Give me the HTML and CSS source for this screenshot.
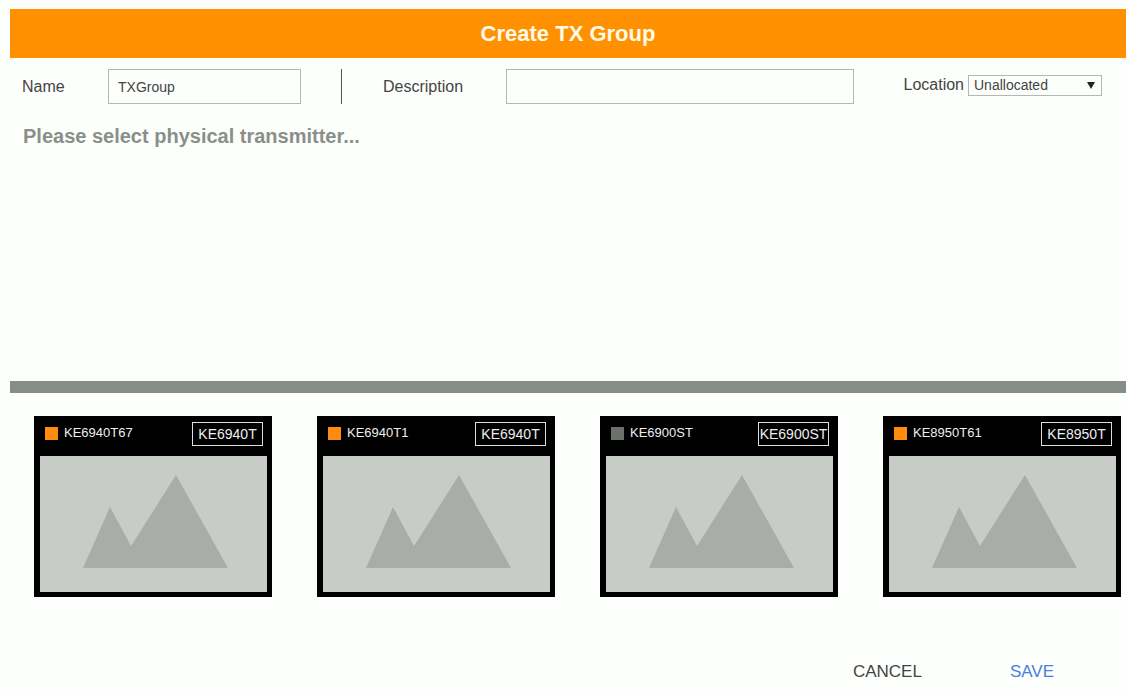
FILE: index.html
```
<!DOCTYPE html>
<html lang="en">
  <head>
    <meta charset="utf-8">
    <title>Create TX Group</title>
    <link rel="stylesheet" href="styles.css">
  </head>
  <body>
    <form class="group_form">
      <h1 class="title">Create TX Group</h1>
      <div class="fields">
        <label class="name_label" for="name">Name</label>
        <input type="text" class="text_box name_box" id="name" value="TXGroup">
        <span class="divider"></span>
        <label class="desc_label" for="desc">Description</label>
        <input type="text" class="text_box desc_box" id="desc">
        <div class="location">
          <label for="location">Location</label>
          <span class="select_wrap">
            <select id="location">
              <option>Unallocated</option>
            </select>
            <svg class="arrow" viewBox="0 0 8 7"><path d="M0 0h8L4 7z"/></svg>
          </span>
        </div>
      </div>
      <div class="selected">
        <h2>Please select physical transmitter...</h2>
      </div>
      <div class="cards">
        <div class="card">
          <div class="card_head">
            <span class="status on"></span>
            <span class="card_name">KE6940T67</span>
            <span class="model">KE6940T</span>
          </div>
          <svg class="preview" viewBox="0 0 227 136"><path d="M43 112L70 51L91 90L136 19L188 112z"/></svg>
        </div>
        <div class="card">
          <div class="card_head">
            <span class="status on"></span>
            <span class="card_name">KE6940T1</span>
            <span class="model">KE6940T</span>
          </div>
          <svg class="preview" viewBox="0 0 227 136"><path d="M43 112L70 51L91 90L136 19L188 112z"/></svg>
        </div>
        <div class="card">
          <div class="card_head">
            <span class="status"></span>
            <span class="card_name">KE6900ST</span>
            <span class="model">KE6900ST</span>
          </div>
          <svg class="preview" viewBox="0 0 227 136"><path d="M43 112L70 51L91 90L136 19L188 112z"/></svg>
        </div>
        <div class="card">
          <div class="card_head">
            <span class="status on"></span>
            <span class="card_name">KE8950T61</span>
            <span class="model">KE8950T</span>
          </div>
          <svg class="preview" viewBox="0 0 227 136"><path d="M43 112L70 51L91 90L136 19L188 112z"/></svg>
        </div>
      </div>
      <div class="actions">
        <button type="button" class="cancel_btn">CANCEL</button>
        <button type="submit" class="save_btn">SAVE</button>
      </div>
    </form>
  </body>
</html>
```

FILE: styles.css
```
* { box-sizing: border-box; }
body {
  margin: 0;
  background-color: #fcfffb;
  color: #444;
  font-family: "Liberation Sans", Arial, sans-serif;
  font-size: 16px;
}
.group_form {
  padding: 9px 2px 0 10px;
}
.title {
  margin: 0;
  padding-right: 0;
  background-color: #ff9000;
  color: #fffbe8;
  font-size: 22px;
  line-height: 49px;
  text-align: center;
}
.fields {
  display: flex;
  align-items: center;
  margin-top: 11px;
  padding: 0 24px 0 12px;
  height: 35px;
}
.text_box {
  height: 35px;
  padding: 0 9px;
  border: 1px solid #b4b8b3;
  background-color: #fdfffd;
  color: #444;
  font-family: inherit;
  font-size: 14px;
}
.name_label { width: 86px; }
.name_box { width: 193px; }
.divider {
  width: 1px;
  height: 35px;
  margin: 0 41px 0 40px;
  background-color: #555;
}
.desc_label { width: 123px; }
.desc_box {
  flex: 1;
  min-width: 0;
}
.location {
  display: flex;
  align-items: center;
  gap: 4px;
  margin-left: 50px;
  padding-bottom: 3px;
}
.select_wrap { position: relative; }
.select_wrap select {
  appearance: none;
  display: block;
  width: 134px;
  height: 21px;
  padding: 0 5px;
  border: 1px solid #b4b8b3;
  border-radius: 0;
  background-color: #fdfffd;
  color: #444;
  font-family: inherit;
  font-size: 14px;
}
.arrow {
  position: absolute;
  top: 7px;
  right: 7px;
  width: 8px;
  height: 7px;
  fill: #222;
  pointer-events: none;
}
.selected {
  height: 289px;
  padding: 20px 13px;
  border-bottom: 12px solid #868d86;
}
.selected h2 {
  margin: 0;
  color: #8b8f8a;
  font-size: 20px;
  line-height: 24px;
}
.cards {
  display: grid;
  grid-template-columns: repeat(4, 1fr);
  gap: 45px;
  padding: 23px 5px 0 24px;
}
.card {
  padding: 0 5px 5px 6px;
  background-color: #000;
}
.card_head {
  display: flex;
  align-items: flex-start;
  height: 40px;
  padding: 6px 4px 0 5px;
}
.status {
  width: 13px;
  height: 13px;
  margin: 5px 6px 0 0;
  background-color: #6b706b;
}
.status.on { background-color: #ff8c10; }
.card_name {
  flex: 1;
  color: #eee;
  font-size: 13px;
  line-height: 22px;
}
.model {
  width: 71px;
  height: 24px;
  border: 1px solid #ddd;
  color: #eee;
  font-size: 14px;
  line-height: 22px;
  text-align: center;
}
.preview {
  display: block;
  width: 100%;
  background-color: #c8ccc6;
}
.preview path { fill: #a8ada7; }
.actions {
  display: flex;
  justify-content: flex-end;
  gap: 88px;
  padding: 63px 72px 6px 0;
}
.actions button {
  padding: 0;
  border: none;
  background: none;
  font-family: inherit;
  font-size: 17px;
  line-height: 24px;
}
.cancel_btn { color: #444; }
.save_btn { color: #4a7fe0; }
```
